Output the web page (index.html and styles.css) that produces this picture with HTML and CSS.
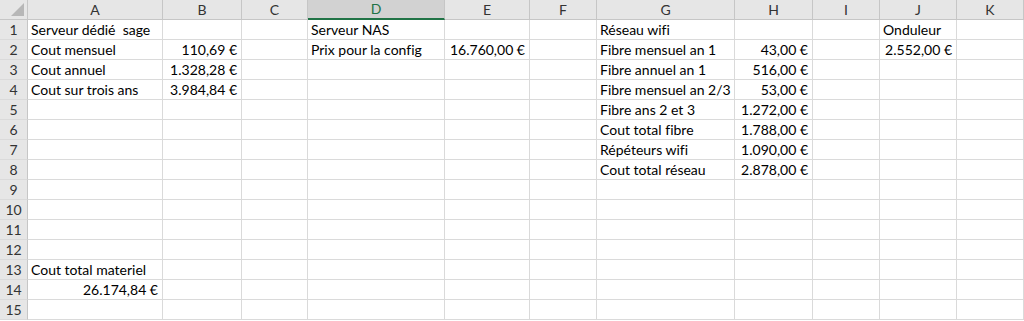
FILE: index.html
```html
<!DOCTYPE html>
<html lang="fr">
<head>
<meta charset="utf-8">
<title>Classeur</title>
<link rel="stylesheet" href="styles.css">
</head>
<body>
<div class="sheet">
  <div class="corner"><span class="tri"></span></div>
  <div class="ch">A</div><div class="ch">B</div><div class="ch">C</div><div class="ch sel">D</div><div class="ch">E</div><div class="ch">F</div><div class="ch">G</div><div class="ch">H</div><div class="ch">I</div><div class="ch">J</div><div class="ch">K</div>

  <div class="rh">1</div><div class="c">Serveur dédié&nbsp; sage</div><div class="c"></div><div class="c"></div><div class="c">Serveur NAS</div><div class="c"></div><div class="c"></div><div class="c">Réseau wifi</div><div class="c"></div><div class="c"></div><div class="c">Onduleur</div><div class="c"></div>

  <div class="rh">2</div><div class="c">Cout mensuel</div><div class="c n">110,69 €</div><div class="c"></div><div class="c">Prix pour la config</div><div class="c n">16.760,00 €</div><div class="c"></div><div class="c">Fibre mensuel an 1</div><div class="c n">43,00 €</div><div class="c"></div><div class="c n">2.552,00 €</div><div class="c"></div>

  <div class="rh">3</div><div class="c">Cout annuel</div><div class="c n">1.328,28 €</div><div class="c"></div><div class="c"></div><div class="c"></div><div class="c"></div><div class="c">Fibre annuel an 1</div><div class="c n">516,00 €</div><div class="c"></div><div class="c"></div><div class="c"></div>

  <div class="rh">4</div><div class="c">Cout sur trois ans</div><div class="c n">3.984,84 €</div><div class="c"></div><div class="c"></div><div class="c"></div><div class="c"></div><div class="c">Fibre mensuel an 2/3</div><div class="c n">53,00 €</div><div class="c"></div><div class="c"></div><div class="c"></div>

  <div class="rh">5</div><div class="c"></div><div class="c"></div><div class="c"></div><div class="c"></div><div class="c"></div><div class="c"></div><div class="c">Fibre ans 2 et 3</div><div class="c n">1.272,00 €</div><div class="c"></div><div class="c"></div><div class="c"></div>

  <div class="rh">6</div><div class="c"></div><div class="c"></div><div class="c"></div><div class="c"></div><div class="c"></div><div class="c"></div><div class="c">Cout total fibre</div><div class="c n">1.788,00 €</div><div class="c"></div><div class="c"></div><div class="c"></div>

  <div class="rh">7</div><div class="c"></div><div class="c"></div><div class="c"></div><div class="c"></div><div class="c"></div><div class="c"></div><div class="c">Répéteurs wifi</div><div class="c n">1.090,00 €</div><div class="c"></div><div class="c"></div><div class="c"></div>

  <div class="rh">8</div><div class="c"></div><div class="c"></div><div class="c"></div><div class="c"></div><div class="c"></div><div class="c"></div><div class="c">Cout total réseau</div><div class="c n">2.878,00 €</div><div class="c"></div><div class="c"></div><div class="c"></div>

  <div class="rh">9</div><div class="c"></div><div class="c"></div><div class="c"></div><div class="c"></div><div class="c"></div><div class="c"></div><div class="c"></div><div class="c"></div><div class="c"></div><div class="c"></div><div class="c"></div>

  <div class="rh">10</div><div class="c"></div><div class="c"></div><div class="c"></div><div class="c"></div><div class="c"></div><div class="c"></div><div class="c"></div><div class="c"></div><div class="c"></div><div class="c"></div><div class="c"></div>

  <div class="rh">11</div><div class="c"></div><div class="c"></div><div class="c"></div><div class="c"></div><div class="c"></div><div class="c"></div><div class="c"></div><div class="c"></div><div class="c"></div><div class="c"></div><div class="c"></div>

  <div class="rh">12</div><div class="c"></div><div class="c"></div><div class="c"></div><div class="c"></div><div class="c"></div><div class="c"></div><div class="c"></div><div class="c"></div><div class="c"></div><div class="c"></div><div class="c"></div>

  <div class="rh">13</div><div class="c">Cout total materiel</div><div class="c"></div><div class="c"></div><div class="c"></div><div class="c"></div><div class="c"></div><div class="c"></div><div class="c"></div><div class="c"></div><div class="c"></div><div class="c"></div>

  <div class="rh">14</div><div class="c n">26.174,84 €</div><div class="c"></div><div class="c"></div><div class="c"></div><div class="c"></div><div class="c"></div><div class="c"></div><div class="c"></div><div class="c"></div><div class="c"></div><div class="c"></div>

  <div class="rh">15</div><div class="c"></div><div class="c"></div><div class="c"></div><div class="c"></div><div class="c"></div><div class="c"></div><div class="c"></div><div class="c"></div><div class="c"></div><div class="c"></div><div class="c"></div>
</div>
</body>
</html>
```

FILE: styles.css
```css
html, body {
  margin: 0;
  padding: 0;
  background: #ffffff;
}
body {
  font-family: Lato, "Open Sans", sans-serif;
  font-size: 14px;
  font-variant-ligatures: none;
  color: #000;
  overflow: hidden;
}
.sheet {
  display: grid;
  grid-template-columns: 28px 135px 79px 66px 137px 85px 67px 138px 78px 67px 77px 1fr;
  grid-template-rows: repeat(16, 20px);
  width: 1024px;
}
.corner {
  background: #e6e6e6;
  border-right: 1px solid #c6c6c6;
  border-bottom: 1px solid #c6c6c6;
  position: relative;
}
.tri {
  position: absolute;
  right: 3px;
  bottom: 3px;
  width: 0;
  height: 0;
  border-left: 13px solid transparent;
  border-bottom: 13px solid #b7b7b7;
}
.ch {
  background: #e6e6e6;
  border-right: 1px solid #c6c6c6;
  border-bottom: 1px solid #c6c6c6;
  color: #333;
  text-align: center;
  line-height: 19px;
}
.ch.sel {
  background: #d2d2d2;
  color: #217346;
  border-bottom: 2px solid #217346;
  line-height: 18px;
}
.rh {
  background: #e6e6e6;
  border-right: 1px solid #c6c6c6;
  border-bottom: 1px solid #dadada;
  color: #333;
  text-align: center;
  line-height: 19px;
}
.c {
  border-right: 1px solid #dadada;
  border-bottom: 1px solid #dadada;
  line-height: 19px;
  padding: 0 3px;
  white-space: nowrap;
  overflow: visible;
}
.c.n {
  text-align: right;
  padding-right: 4px;
}
```
